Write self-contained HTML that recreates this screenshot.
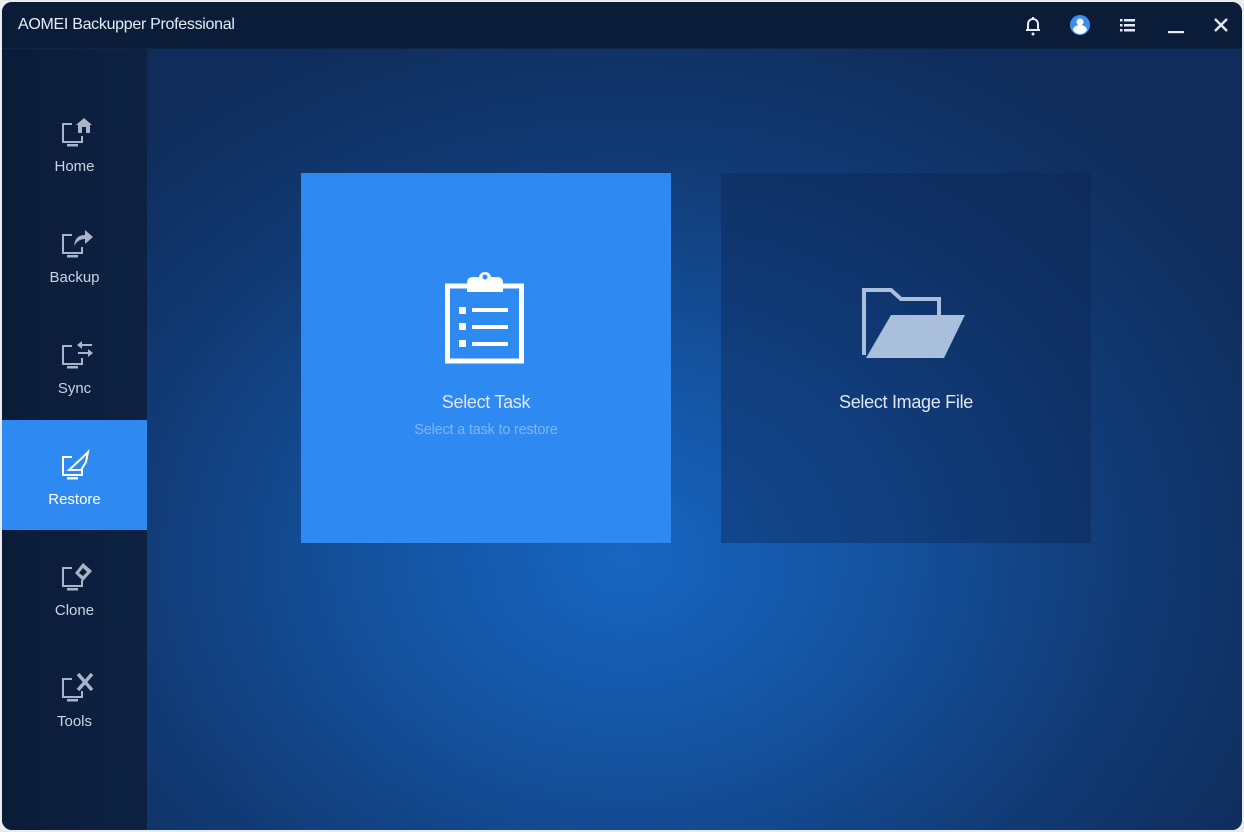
<!DOCTYPE html>
<html><head><meta charset="utf-8"><style>
*{margin:0;padding:0;box-sizing:border-box}
body{width:1244px;height:832px;background:#e9ebef;font-family:"Liberation Sans",sans-serif;overflow:hidden;position:relative}
.win{position:absolute;left:2px;top:2px;width:1240px;height:828px;border-radius:10px;overflow:hidden;background:#0c1d3a}
.title{position:absolute;left:0;top:0;width:1240px;height:47px;background:#0b1c38;border-bottom:1px solid #0f2545}
.title span{position:absolute;left:16px;top:14px;color:#e6ecf5;font-size:16px;letter-spacing:-0.3px}
.side{position:absolute;left:0;top:47px;width:145px;height:781px;background:linear-gradient(90deg,#0b1c38,#0d2142)}
.main{position:absolute;left:145px;top:47px;width:1095px;height:781px;background:radial-gradient(ellipse 720px 580px at 480px 510px,#1766c2 0%,#14529f 35%,#113a74 70%,#0f2c5a 100%)}
.hl{position:absolute;left:0;top:371px;width:145px;height:110px;background:#2e89f0}
.item{position:absolute;left:0;width:145px;height:111px;text-align:center;color:#c9d3e2;font-size:15px}
.item svg{position:absolute;left:56px;top:20px}
.item div{position:absolute;left:0;width:145px;top:63px}
.item.act{color:#fff}
.card{position:absolute;top:124px;width:370px;height:370px;text-align:center}
.c1{left:154px;background:#2e89f0}
.c2{left:574px;background:rgba(12,35,80,0.4)}
.t{position:absolute;left:0;width:370px;top:219px;font-size:18px;color:#dfe8f5;letter-spacing:-0.3px}
.s{position:absolute;left:0;width:370px;top:249px;font-size:14.5px;color:#82b6f3;letter-spacing:-0.2px}
</style></head><body>
<div class="win">
<div class="title"><span>AOMEI Backupper Professional</span>
<svg style="position:absolute;left:1020px;top:12px" width="220" height="24" viewBox="0 0 220 24">
<g fill="none" stroke="#e6ecf5" stroke-width="2">
<path d="M6 16 V10 a5 5 0 0 1 10 0 V16 Z"/><path d="M4 16h14"/></g>
<circle cx="11" cy="20" r="1.5" fill="#e6ecf5"/><rect x="10" y="3" width="2" height="3" fill="#e6ecf5"/>
<circle cx="58" cy="11" r="10" fill="#3a8ff0"/><circle cx="58" cy="8" r="3.5" fill="#fff"/><path d="M51 16 a7 5 0 0 1 14 0 a8 8 0 0 1 -14 0z" fill="#fff"/>
<g fill="#e6ecf5"><rect x="98" y="5" width="2.5" height="2.5"/><rect x="102" y="5" width="11" height="2.5"/><rect x="98" y="10" width="2.5" height="2.5"/><rect x="102" y="10" width="11" height="2.5"/><rect x="98" y="15" width="2.5" height="2.5"/><rect x="102" y="15" width="11" height="2.5"/>
<rect x="146" y="17" width="16" height="2.2"/></g>
<path d="M193 5 L205 17 M205 5 L193 17" stroke="#e6ecf5" stroke-width="2.4"/>
</svg></div>
<div class="side">
<div class="hl"></div>
<div class="item" style="top:46px"><svg width="40" height="40" viewBox="0 0 40 40"><g fill="none" stroke="#a8b4c8" stroke-width="2"><path d="M14 9H5v18h19v-6"/></g><rect x="9" y="29" width="11" height="2.5" fill="#a8b4c8"/><path d="M18 10 L26 3 L34 10 H32 V18 H20 V10Z" fill="#a8b4c8"/><rect x="24" y="12" width="4" height="6" fill="#0c1d3a"/></svg><div>Home</div></div>
<div class="item" style="top:157px"><svg width="40" height="40" viewBox="0 0 40 40"><g fill="none" stroke="#a8b4c8" stroke-width="2"><path d="M14 9H5v18h19v-6"/></g><rect x="9" y="29" width="11" height="2.5" fill="#a8b4c8"/><path d="M16 20 Q17 9 27 9 V4 L35 11 L27 18 V13 Q20 13 16 20Z" fill="#a8b4c8"/></svg><div>Backup</div></div>
<div class="item" style="top:268px"><svg width="40" height="40" viewBox="0 0 40 40"><g fill="none" stroke="#a8b4c8" stroke-width="2"><path d="M14 9H5v18h19v-6"/><path d="M20 8h14M20 16h14"/></g><rect x="9" y="29" width="11" height="2.5" fill="#a8b4c8"/><path d="M19 8 l5-4v8z M35 16 l-5-4v8z" fill="#a8b4c8"/></svg><div>Sync</div></div>
<div class="item act" style="top:379px"><svg width="40" height="40" viewBox="0 0 40 40"><g fill="none" stroke="#fff" stroke-width="2"><path d="M14 9H5v18h19v-6"/><path d="M11 22 L24 10 L30 4 L28 14 L23 22 Z"/></g><rect x="9" y="29" width="11" height="2.5" fill="#fff"/></svg><div>Restore</div></div>
<div class="item" style="top:490px"><svg width="40" height="40" viewBox="0 0 40 40"><g fill="none" stroke="#a8b4c8" stroke-width="2"><path d="M14 9H5v18h19v-6"/></g><rect x="9" y="29" width="11" height="2.5" fill="#a8b4c8"/><path d="M17 14 L25 4 L34 12 L25 22Z" fill="#a8b4c8"/><path d="M21 14 L25 9 L29 13 L25 17Z" fill="#0c1d3a"/></svg><div>Clone</div></div>
<div class="item" style="top:601px"><svg width="40" height="40" viewBox="0 0 40 40"><g fill="none" stroke="#a8b4c8" stroke-width="2"><path d="M14 9H5v18h19v-6"/></g><rect x="9" y="29" width="11" height="2.5" fill="#a8b4c8"/><path d="M20 4 L34 20 M34 4 L20 20" stroke="#a8b4c8" stroke-width="3.5"/></svg><div>Tools</div></div>
</div>
<div class="main">
<div class="card c1">
<svg style="position:absolute;left:141px;top:96px" width="90" height="100" viewBox="0 0 90 100">
<rect x="5.5" y="17" width="74" height="75" fill="none" stroke="#fff" stroke-width="5"/>
<path d="M25 14 Q25 8 31 8 H37 Q38 3 43 3 Q48 3 49 8 H55 Q61 8 61 14 V23 H25Z" fill="#fff"/><circle cx="43" cy="8" r="2.5" fill="#2e89f0"/>
<g fill="#fff"><rect x="17" y="38" width="7" height="7"/><rect x="30" y="39" width="36" height="4"/><rect x="17" y="54" width="7" height="7"/><rect x="30" y="56" width="36" height="4"/><rect x="17" y="71" width="7" height="7"/><rect x="30" y="73" width="36" height="4"/></g>
</svg>
<div class="t">Select Task</div><div class="s">Select a task to restore</div></div>
<div class="card c2">
<svg style="position:absolute;left:140px;top:112px" width="110" height="80" viewBox="0 0 110 80">
<path d="M3 70 V5 H30 L40 14 H78 V30" fill="none" stroke="#a9bfdc" stroke-width="4"/>
<path d="M30 30 H104 L83 73 H5Z" fill="#a9bfdc"/>
</svg>
<div class="t">Select Image File</div></div>
</div>
</div>
</body></html>
